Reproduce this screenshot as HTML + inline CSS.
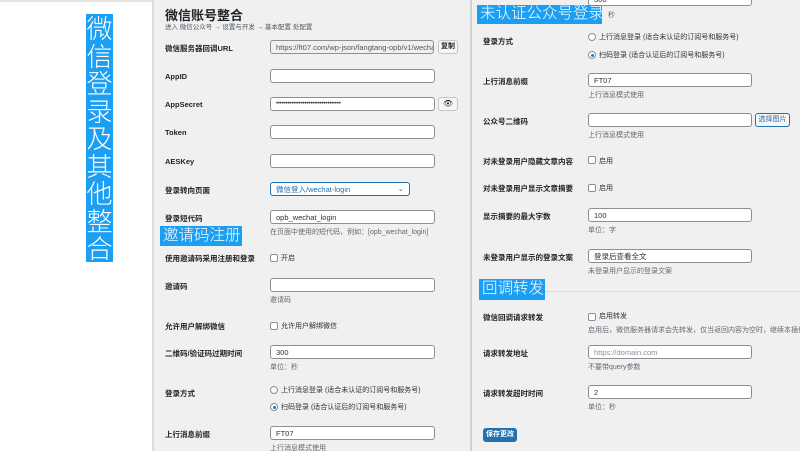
<!DOCTYPE html>
<html><head><meta charset="utf-8"><style>
*{margin:0;padding:0;box-sizing:border-box}
body{width:800px;height:451px;overflow:hidden;background:#fff;position:relative;font-family:"Liberation Sans","Noto Sans CJK SC",sans-serif;color:#1d2327}
.a{position:absolute;white-space:nowrap}
.p{position:absolute;background:#f0f0f1}
.l{position:absolute;font-size:7.5px;font-weight:bold;color:#1d2327;white-space:nowrap}
.d{position:absolute;font-size:7px;color:#646970;white-space:nowrap}
.i{position:absolute;height:14px;background:#fff;border:1px solid #8c8f94;border-radius:3px;font-size:7.5px;padding:2px 5px;line-height:9px;color:#2c3338;white-space:nowrap;overflow:hidden}
.cb{position:absolute;width:8px;height:8px;border:1px solid #8c8f94;background:#fff;border-radius:2px}
.rd{position:absolute;width:8px;height:8px;border:1px solid #8c8f94;background:#fff;border-radius:50%}
.rd.on::after{content:"";position:absolute;left:1.5px;top:1.5px;width:3px;height:3px;border-radius:50%;background:#2271b1}
.tag{position:absolute;background:#1c9ff2;color:#fff;font-weight:300;white-space:nowrap;line-height:1}
.btn{position:absolute;height:14px;border:1px solid #2271b1;border-radius:3px;background:#f6f7f7;font-size:7px;color:#2271b1;text-align:center;line-height:12px}
</style></head><body>
<div class="a" style="left:0;top:0;width:152px;height:2px;background:#e5e5e5"></div>
<div class="tag" style="left:86px;top:14px;width:27px;height:248px;font-size:26px;text-align:center;line-height:27.5px;padding-top:2px">微<br>信<br>登<br>录<br>及<br>其<br>他<br>整<br>合</div>

<div class="a" style="left:152px;top:0;width:2px;height:451px;background:#dcdcde"></div>
<div class="p" style="left:154px;top:0;width:316px;height:451px"></div>
<div class="a" style="left:470px;top:0;width:2px;height:451px;background:#d0d0d2"></div>
<div class="p" style="left:472px;top:0;width:328px;height:451px"></div>

<!-- left panel -->
<div class="a" style="left:165px;top:5px;font-size:13px;font-weight:bold;color:#1d2327">微信账号整合</div>
<div class="d" style="left:165px;top:21px;font-size:6.5px;color:#50575e">进入 微信公众号 → 设置与开发 → 基本配置 处配置</div>
<div class="l" style="left:165px;top:43px">微信服务器回调URL</div>
<div class="i" style="left:270px;top:40px;width:164px;background:#f0f0f1;color:#50575e">https://ft07.com/wp-json/fangtang-opb/v1/wechat</div>
<div class="btn" style="left:438px;top:40px;width:20px;border-color:#c3c4c7;color:#1d2327;font-weight:bold">复制</div>
<div class="l" style="left:165px;top:72px">AppID</div>
<div class="i" style="left:270px;top:69px;width:165px"></div>
<div class="l" style="left:165px;top:100px">AppSecret</div>
<div class="i" style="left:270px;top:97px;width:165px;font-size:6px;letter-spacing:-.2px">••••••••••••••••••••••••••••••••••</div>
<div class="btn" style="left:438px;top:97px;width:20px;border-color:#c3c4c7;color:#1d2327;font-size:8px">👁</div>
<div class="l" style="left:165px;top:128px">Token</div>
<div class="i" style="left:270px;top:125px;width:165px"></div>
<div class="l" style="left:165px;top:157px">AESKey</div>
<div class="i" style="left:270px;top:154px;width:165px"></div>
<div class="l" style="left:165px;top:185px">登录转向页面</div>
<div class="i" style="left:270px;top:182px;width:140px;border-color:#2271b1;color:#2271b1">微信登入/wechat-login<span style="position:absolute;right:5px;top:1px;color:#50575e">⌄</span></div>
<div class="l" style="left:165px;top:213px">登录短代码</div>
<div class="i" style="left:270px;top:210px;width:165px">opb_wechat_login</div>
<div class="d" style="left:270px;top:227px">在页面中使用的短代码，例如：[opb_wechat_login]</div>
<div class="tag" style="left:160px;top:226px;width:82px;height:20px;font-size:15.5px;padding:2px 0 0 3px">邀请码注册</div>
<div class="l" style="left:165px;top:253px">使用邀请码采用注册和登录</div>
<div class="cb" style="left:270px;top:254px"></div><div class="d" style="left:281px;top:253px;color:#2c3338">开启</div>
<div class="l" style="left:165px;top:281px">邀请码</div>
<div class="i" style="left:270px;top:278px;width:165px"></div>
<div class="d" style="left:270px;top:295px">邀请码</div>
<div class="l" style="left:165px;top:321px">允许用户解绑微信</div>
<div class="cb" style="left:270px;top:322px"></div><div class="d" style="left:281px;top:321px;color:#2c3338">允许用户解绑微信</div>
<div class="l" style="left:165px;top:348px">二维码/验证码过期时间</div>
<div class="i" style="left:270px;top:345px;width:165px">300</div>
<div class="d" style="left:270px;top:362px">单位：秒</div>
<div class="l" style="left:165px;top:388px">登录方式</div>
<div class="rd" style="left:270px;top:386px"></div><div class="d" style="left:281px;top:385px;color:#2c3338">上行消息登录 (适合未认证的订阅号和服务号)</div>
<div class="rd on" style="left:270px;top:403px"></div><div class="d" style="left:281px;top:402px;color:#2c3338">扫码登录 (适合认证后的订阅号和服务号)</div>
<div class="l" style="left:165px;top:429px">上行消息前缀</div>
<div class="i" style="left:270px;top:426px;width:165px">FT07</div>
<div class="d" style="left:270px;top:443px">上行消息模式使用</div>

<!-- right panel -->
<div class="i" style="left:588px;top:-8px;width:164px">300</div>
<div class="d" style="left:608px;top:10px">秒</div>
<div class="tag" style="left:477px;top:5px;width:125px;height:19px;font-size:15.5px;padding:1px 0 0 3px">未认证公众号登录</div>
<div class="l" style="left:483px;top:36px">登录方式</div>
<div class="rd" style="left:588px;top:33px"></div><div class="d" style="left:599px;top:32px;color:#2c3338">上行消息登录 (适合未认证的订阅号和服务号)</div>
<div class="rd on" style="left:588px;top:51px"></div><div class="d" style="left:599px;top:50px;color:#2c3338">扫码登录 (适合认证后的订阅号和服务号)</div>
<div class="l" style="left:483px;top:76px">上行消息前缀</div>
<div class="i" style="left:588px;top:73px;width:164px">FT07</div>
<div class="d" style="left:588px;top:90px">上行消息模式使用</div>
<div class="l" style="left:483px;top:116px">公众号二维码</div>
<div class="i" style="left:588px;top:113px;width:164px"></div>
<div class="btn" style="left:755px;top:113px;width:35px">选择图片</div>
<div class="d" style="left:588px;top:130px">上行消息模式使用</div>
<div class="l" style="left:483px;top:156px">对未登录用户隐藏文章内容</div>
<div class="cb" style="left:588px;top:156px"></div><div class="d" style="left:599px;top:156px;color:#2c3338">启用</div>
<div class="l" style="left:483px;top:183px">对未登录用户显示文章摘要</div>
<div class="cb" style="left:588px;top:184px"></div><div class="d" style="left:599px;top:183px;color:#2c3338">启用</div>
<div class="l" style="left:483px;top:211px">显示摘要的最大字数</div>
<div class="i" style="left:588px;top:208px;width:164px">100</div>
<div class="d" style="left:588px;top:225px">单位：字</div>
<div class="l" style="left:483px;top:252px">未登录用户显示的登录文案</div>
<div class="i" style="left:588px;top:249px;width:164px">登录后查看全文</div>
<div class="d" style="left:588px;top:266px">未登录用户显示的登录文案</div>
<div class="a" style="left:545px;top:291px;width:255px;height:1px;background:#dcdcde"></div>
<div class="tag" style="left:479px;top:279px;width:66px;height:21px;font-size:15.5px;padding:2px 0 0 3px">回调转发</div>
<div class="l" style="left:483px;top:312px">微信回调请求转发</div>
<div class="cb" style="left:588px;top:313px"></div><div class="d" style="left:599px;top:311px;color:#2c3338">启用转发</div>
<div class="d" style="left:588px;top:325px">启用后，微信服务器请求会先转发，仅当返回内容为空时，继续本插件逻辑</div>
<div class="l" style="left:483px;top:348px">请求转发地址</div>
<div class="i" style="left:588px;top:345px;width:164px;color:#8c8f94">https://domain.com</div>
<div class="d" style="left:588px;top:362px">不要带query参数</div>
<div class="l" style="left:483px;top:388px">请求转发超时时间</div>
<div class="i" style="left:588px;top:385px;width:164px">2</div>
<div class="d" style="left:588px;top:402px">单位：秒</div>
<div class="btn" style="left:483px;top:428px;width:34px;background:#2271b1;color:#fff;font-weight:bold">保存更改</div>
</body></html>
